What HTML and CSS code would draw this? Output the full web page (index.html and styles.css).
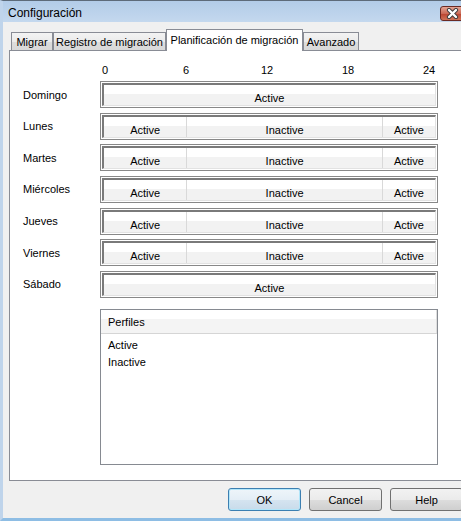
FILE: index.html
```html
<!DOCTYPE html>
<html lang="es">
<head>
  <meta charset="UTF-8" />
  <meta name="viewport" content="width=device-width, initial-scale=1.0" />
  <title>Configuración</title>
  <link rel="stylesheet" href="styles.css">
</head>
<body>
  <div class="window">
    <div class="titlebar">
      <span class="title">Configuración</span>
      <button class="close-btn" aria-label="Cerrar">
        <svg width="13" height="11" viewBox="0 0 13 11">
          <path d="M3 2 L10 9 M10 2 L3 9" stroke="#3b3b3b" stroke-width="4.2" stroke-linecap="round" fill="none"/>
          <path d="M3 2 L10 9 M10 2 L3 9" stroke="#ffffff" stroke-width="2.4" stroke-linecap="round" fill="none"/>
        </svg>
      </button>
    </div>

    <div class="dialog-body">
      <!-- tab strip -->
      <div class="tabs">
        <div class="tab tab-migrar">Migrar</div>
        <div class="tab tab-registro">Registro de migración</div>
        <div class="tab tab-plan selected">Planificación de migración</div>
        <div class="tab tab-avanzado">Avanzado</div>
      </div>

      <div class="tab-panel">
        <div class="schedule">
          <div class="scale">
            <span class="tick"><span>0</span></span>
            <span class="tick"><span>6</span></span>
            <span class="tick"><span>12</span></span>
            <span class="tick"><span>18</span></span>
            <span class="tick"><span>24</span></span>
          </div>

          <div class="days">
            <div class="day-row">
              <span class="day-label">Domingo</span>
              <div class="bar"><div class="bar-inner">
                <div class="seg" style="flex-grow: 24">Active</div>
              </div></div>
            </div>
            <div class="day-row">
              <span class="day-label">Lunes</span>
              <div class="bar"><div class="bar-inner">
                <div class="seg" style="flex-grow: 6">Active</div>
                <div class="seg" style="flex-grow: 14.2">Inactive</div>
                <div class="seg" style="flex-grow: 3.8">Active</div>
              </div></div>
            </div>
            <div class="day-row">
              <span class="day-label">Martes</span>
              <div class="bar"><div class="bar-inner">
                <div class="seg" style="flex-grow: 6">Active</div>
                <div class="seg" style="flex-grow: 14.2">Inactive</div>
                <div class="seg" style="flex-grow: 3.8">Active</div>
              </div></div>
            </div>
            <div class="day-row">
              <span class="day-label">Miércoles</span>
              <div class="bar"><div class="bar-inner">
                <div class="seg" style="flex-grow: 6">Active</div>
                <div class="seg" style="flex-grow: 14.2">Inactive</div>
                <div class="seg" style="flex-grow: 3.8">Active</div>
              </div></div>
            </div>
            <div class="day-row">
              <span class="day-label">Jueves</span>
              <div class="bar"><div class="bar-inner">
                <div class="seg" style="flex-grow: 6">Active</div>
                <div class="seg" style="flex-grow: 14.2">Inactive</div>
                <div class="seg" style="flex-grow: 3.8">Active</div>
              </div></div>
            </div>
            <div class="day-row">
              <span class="day-label">Viernes</span>
              <div class="bar"><div class="bar-inner">
                <div class="seg" style="flex-grow: 6">Active</div>
                <div class="seg" style="flex-grow: 14.2">Inactive</div>
                <div class="seg" style="flex-grow: 3.8">Active</div>
              </div></div>
            </div>
            <div class="day-row">
              <span class="day-label">Sábado</span>
              <div class="bar"><div class="bar-inner">
                <div class="seg" style="flex-grow: 24">Active</div>
              </div></div>
            </div>
          </div>
        </div>

        <!-- profiles list view -->
        <div class="profiles">
          <div class="profiles-header">
            <div class="col-head">Perfiles</div>
          </div>
          <ul class="profiles-list">
            <li>Active</li>
            <li>Inactive</li>
          </ul>
        </div>
      </div>

      <div class="buttons">
        <button class="btn btn-default">OK</button>
        <button class="btn">Cancel</button>
        <button class="btn">Help</button>
      </div>
    </div>
  </div>
</body>
</html>
```

FILE: styles.css
```css
html, body {
  margin: 0;
  padding: 0;
}
body {
  font-family: "Liberation Sans", Arial, sans-serif;
  font-size: 11px;
  color: #000;
  background-color: #f0f0f0;
  overflow: hidden;
  width: 461px;
  height: 521px;
}
.window {
  box-sizing: border-box;
  width: 472px;
  height: 521px;
  background: #f0f0f0;
  border-top: 1px solid #5d6b7a;
  border-left: 3px solid #bfd4eb;
  border-right: 3px solid #bfd4eb;
  border-bottom: 3px solid #8ebde4;
  display: flex;
  flex-direction: column;
}
.titlebar {
  box-sizing: border-box;
  height: 21px;
  display: flex;
  align-items: center;
  padding: 3px 4px 0 5px;
  background: linear-gradient(#b2cce8, #c4d8ee);
}
.title {
  font-size: 12px;
  color: #000;
  flex: 1;
}
.close-btn {
  width: 25px;
  height: 15px;
  padding: 0;
  border: 1px solid #6b2a23;
  border-radius: 3px;
  background: linear-gradient(#e3a595, #cc6a56 50%, #bb4330 51%, #cf7458);
  display: flex;
  align-items: center;
  justify-content: center;
}
.close-btn svg {
  display: block;
}

/* body of the dialog */
.dialog-body {
  flex: 1;
  padding: 7px 6px 0 6px;
  display: flex;
  flex-direction: column;
}
.tabs {
  display: flex;
  align-items: flex-end;
  height: 22px;
  margin-bottom: -1px;
  padding-left: 2px;
  position: relative;
  z-index: 1;
}
.tab {
  box-sizing: border-box;
  height: 18px;
  margin-bottom: 1px;
  border: 1px solid #898c95;
  border-bottom: none;
  background: linear-gradient(#f3f3f3, #ebebeb 50%, #dddddd 51%, #d9d9d9);
  text-align: center;
  line-height: 19px;
  white-space: nowrap;
}
.tab-migrar { width: 42px; }
.tab-registro { width: 113px; }
.tab-plan { width: 137px; }
.tab-avanzado { width: 56px; }
.tab.selected {
  height: 22px;
  margin-bottom: 0;
  background: #fff;
  line-height: 20px;
}

.tab-panel {
  box-sizing: border-box;
  height: 431px;
  background: #fff;
  border: 1px solid #898c95;
  padding: 0 0 0 13px;
}
.scale {
  display: flex;
  justify-content: space-between;
  width: 324px;
  margin: 12px 0 4px 82px;
  line-height: 14px;
}
.tick {
  width: 0;
  display: flex;
  justify-content: center;
}
.days {
  display: flex;
  flex-direction: column;
  gap: 4.67px;
}
.day-row {
  display: flex;
  align-items: center;
  height: 27px;
}
.day-label {
  width: 77px;
}
.bar {
  box-sizing: border-box;
  width: 338px;
  height: 27px;
  border: 1px solid #888888;
  padding: 1px;
  background: #fff;
}
.bar-inner {
  box-sizing: border-box;
  height: 100%;
  display: flex;
  border-top: 2px solid #7a7a7a;
  border-left: 2px solid #7a7a7a;
  border-right: 1px solid #e2e2e2;
  border-bottom: 1px solid #e2e2e2;
}
.seg {
  flex-basis: 0;
  min-width: 0;
  text-align: center;
  line-height: 13px;
  padding-top: 7px;
  background: linear-gradient(#fff 9px, #f2f2f2 9px);
}
.seg + .seg {
  border-left: 1px solid #d9d9d9;
}

.profiles {
  box-sizing: border-box;
  width: 338px;
  height: 156px;
  margin: 11px 0 0 77px;
  border: 1px solid #868a91;
}
.profiles-header {
  box-sizing: border-box;
  height: 24px;
  display: flex;
  border-bottom: 1px solid #d5d5d5;
  background: linear-gradient(#fff 9px, #f4f4f4 9px);
}
.col-head {
  width: 331px;
  padding-left: 7px;
  line-height: 25px;
  border-right: 1px solid #dedede;
}
.profiles-list {
  list-style: none;
  margin: 0;
  padding: 3px 0 0 7px;
}
.profiles-list li {
  line-height: 17px;
}

.buttons {
  display: flex;
  justify-content: flex-end;
  gap: 8px;
  margin-top: 7px;
}
.btn {
  box-sizing: border-box;
  width: 73px;
  height: 23px;
  padding: 0;
  font-family: inherit;
  font-size: 11px;
  color: #000;
  border: 1px solid #707070;
  border-radius: 3px;
  background: linear-gradient(#f2f2f2, #ebebeb 50%, #dddddd 51%, #cfcfcf);
}
.btn-default {
  border-color: #3c7fb1;
  box-shadow: inset 0 0 0 1px #b2e6fa;
  background: linear-gradient(#eef5fa, #e4eef6 50%, #d5e4f0 51%, #c8dbea);
}
```
